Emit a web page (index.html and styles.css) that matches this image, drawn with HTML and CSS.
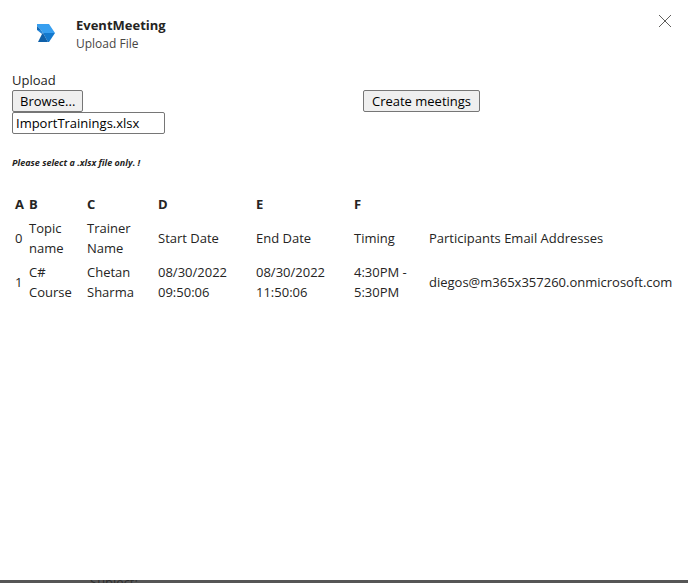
FILE: index.html
```html
<!DOCTYPE html>
<html lang="en">
<head>
<meta charset="utf-8">
<title>EventMeeting</title>
<link rel="stylesheet" href="styles.css">
</head>
<body>
<main class="dialog">
  <header class="dialog-header">
    <svg class="logo" viewBox="0 0 18 18" aria-hidden="true">
      <path d="M0 0H12L18 9H6L4 6L0 2Z" fill="#379ff0"/>
      <path d="M0 2L4 6H0Z" fill="#1268b4"/>
      <path d="M0 6H4L6 9L5 10Z" fill="#2585d6"/>
      <path d="M6 9H18L12 18H11Z" fill="#1379ce"/>
      <path d="M6 9L11 18H1L5 10Z" fill="#0f60a9"/>
    </svg>
    <div class="titles">
      <h1 class="title">EventMeeting</h1>
      <p class="subtitle">Upload File</p>
    </div>
    <button class="close" type="button" aria-label="Close">
      <svg class="close-icon" viewBox="0 0 14 14" aria-hidden="true"><path d="M1 1L13 13M13 1L1 13" fill="none" stroke="#605e5c"/></svg>
    </button>
  </header>
  <form class="upload">
    <div class="upload-file">
      <label class="label" for="file-name">Upload</label>
      <button class="button browse" type="button">Browse...</button>
      <input class="file-name" id="file-name" type="text" value="ImportTrainings.xlsx">
    </div>
    <div class="upload-action">
      <button class="button create" type="button">Create meetings</button>
    </div>
  </form>
  <p class="note">Please select a .xlsx file only. !</p>
  <table class="sheet">
    <colgroup><col class="col-a"><col class="col-b"><col class="col-c"><col class="col-d"><col class="col-e"><col class="col-f"><col></colgroup>
    <thead>
      <tr><th>A</th><th>B</th><th>C</th><th>D</th><th>E</th><th>F</th><td></td></tr>
    </thead>
    <tbody>
      <tr><td>0</td><td>Topic name</td><td>Trainer Name</td><td>Start Date</td><td>End Date</td><td>Timing</td><td>Participants Email Addresses</td></tr>
      <tr><td>1</td><td>C# Course</td><td>Chetan Sharma</td><td>08/30/2022 09:50:06</td><td>08/30/2022 11:50:06</td><td>4:30PM - 5:30PM</td><td>diegos@m365x357260.onmicrosoft.com</td></tr>
    </tbody>
  </table>
</main>
<div class="backdrop"><span class="backdrop-text">Subject:</span></div>
</body>
</html>
```
FILE: styles.css
```css
* { box-sizing: border-box; }

body {
  margin: 0;
  min-height: 100vh;
  display: flex;
  flex-direction: column;
  background: #fff;
  color: #252423;
  font-family: "Open Sans", "Noto Sans", sans-serif;
  font-size: 13px;
  line-height: 20px;
}

button, input { font: inherit; }

.dialog { flex: 1; padding: 11px 8px 0 12px; }

.dialog-header {
  display: flex;
  align-items: flex-start;
  height: 59px;
}

.logo { width: 18px; height: 18px; margin: 13px 21px 0 25px; }

.titles { flex: 1; padding-top: 4px; }

.title, .subtitle, .note { margin: 0; }

.title { font-size: 13px; font-weight: 700; line-height: 20px; }

.subtitle { font-size: 12px; line-height: 18px; color: #484644; }

.close {
  display: flex;
  padding: 3px;
  margin-right: 5px;
  border: 0;
  background: none;
}

.close-icon { width: 14px; height: 14px; }

.upload { display: grid; grid-template-columns: 351px 1fr; }

.upload-file { display: flex; flex-direction: column; align-items: flex-start; }

.upload-action { padding-top: 20px; }

.button {
  display: block;
  height: 22px;
  padding: 0 7px;
  border: 1px solid #767676;
  border-radius: 2px;
  background: #efefef;
  color: #000;
  line-height: 20px;
}

.browse { width: 71px; }

.create { width: 117px; }

.file-name {
  width: 153px;
  height: 22px;
  padding: 0 3px;
  border: 1px solid #767676;
  border-radius: 2px;
  background: #fff;
  color: #000;
}

.note {
  padding: 19px 0 18px;
  font-size: 9px;
  font-style: italic;
  font-weight: 700;
}

.sheet {
  width: 100%;
  table-layout: fixed;
  border-spacing: 2px;
}

.sheet th, .sheet td { padding: 1px; text-align: left; vertical-align: middle; }

.col-a { width: 12px; }
.col-b { width: 56px; }
.col-c { width: 69px; }
.col-d { width: 96px; }
.col-e { width: 96px; }
.col-f { width: 73px; }

.backdrop {
  display: flex;
  align-items: flex-start;
  height: 3px;
  padding-left: 90px;
  overflow: hidden;
  background: #565656;
}

.backdrop-text { margin-top: -8px; color: #2e2e2e; }
```
